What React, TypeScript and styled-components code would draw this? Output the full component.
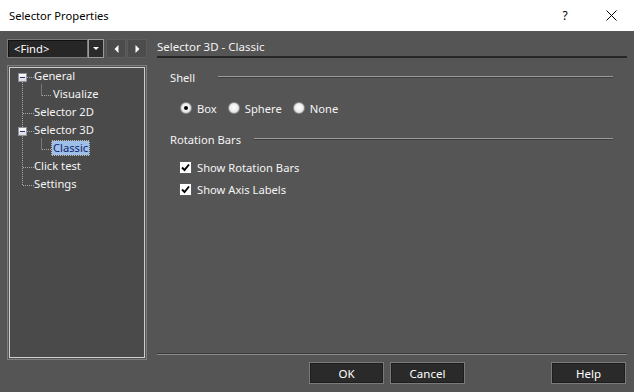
import React from 'react';
import styled, { createGlobalStyle } from 'styled-components';

const FONT = `"Noto Sans", "Segoe UI", "Liberation Sans", Arial, sans-serif`;

const Global = createGlobalStyle`
  html, body { margin: 0; padding: 0; background: #555555; }
  body { font-family: ${FONT}; font-size: 11.2px; }
  * { box-sizing: border-box; }
`;

const Window = styled.div`
  width: 634px;
  height: 392px;
  display: flex;
  flex-direction: column;
  background: #555555;
  overflow: hidden;
  color: #f4f4f4;
`;

const TitleBar = styled.div`
  height: 31px;
  flex: none;
  display: flex;
  align-items: center;
  background: #ffffff;
  color: #000;
  padding-left: 9px;
`;

const Title = styled.span`
  font-size: 11.2px;
  line-height: 16px;
`;

const TitleButtons = styled.div`
  margin-left: auto;
  display: flex;
  height: 100%;
`;

const TitleButton = styled.div`
  width: 46px;
  height: 100%;
  display: flex;
  align-items: center;
  justify-content: center;
  font-size: 12px;
  color: #000;
`;

const Body = styled.div`
  flex: 1;
  display: flex;
  gap: 10px;
  padding: 8px 7px 8px 7px;
  min-height: 0;
`;

const LeftCol = styled.div`
  width: 140px;
  flex: none;
  display: flex;
  flex-direction: column;
  gap: 7px;
  margin-bottom: 24px;
`;

const FindRow = styled.div`
  height: 19px;
  display: flex;
  flex: none;
`;

const Combo = styled.div`
  width: 82px;
  height: 19px;
  background: #262626;
  border: 1px solid #7a7a7a;
  box-shadow: inset 1px 1px 0 #111;
  display: flex;
  align-items: center;
  padding-left: 6px;
  font-size: 11.2px;
  color: #fff;
`;

const DropButton = styled.div`
  width: 16px;
  height: 19px;
  background: #2b2b2b;
  border: 1px solid #9a9a9a;
  display: flex;
  align-items: center;
  justify-content: center;
`;

const NavButton = styled.div<{ $gap?: number }>`
  width: 20px;
  height: 19px;
  margin-left: ${(p) => p.$gap ?? 0}px;
  background: #4c4c4c;
  border: 1px solid #5c5c5c;
  display: flex;
  align-items: center;
  justify-content: center;
`;

const TreeOuter = styled.div`
  flex: 1;
  border: 1px solid #7e7e7e;
  padding: 1px;
  display: flex;
`;

const TreeInner = styled.div`
  flex: 1;
  position: relative;
  border: 1px solid #cfcfcf;
  background: #4a4a4a;
`;

const TreeLines = styled.svg`
  position: absolute;
  left: 0;
  top: 0;
  pointer-events: none;
`;

const TreeRow = styled.div<{ $level: number }>`
  position: relative;
  height: 18px;
  display: flex;
  align-items: flex-start;
  padding-left: ${(p) => 22 + p.$level * 19}px;
`;

const TreeLabel = styled.span<{ $selected?: boolean }>`
  height: 16px;
  line-height: 16px;
  padding: 0 2px;
  font-size: 11.2px;
  color: ${(p) => (p.$selected ? '#14246e' : '#f4f4f4')};
  background: ${(p) => (p.$selected ? '#9ebfe8' : 'transparent')};
  outline: ${(p) => (p.$selected ? '1px dotted #6b4a1e' : 'none')};
  outline-offset: -1px;
`;

const RightCol = styled.div`
  flex: 1;
  display: flex;
  flex-direction: column;
  min-width: 0;
`;

const Header = styled.div`
  height: 19px;
  flex: none;
  font-size: 11.5px;
  line-height: 15px;
  color: #f4f4f4;
  border-bottom: 2px solid #262626;
`;

const Content = styled.div`
  padding: 0 14px 0 13px;
  display: flex;
  flex-direction: column;
`;

const SectionHead = styled.div<{ $top: number }>`
  height: 20px;
  margin-top: ${(p) => p.$top}px;
  display: flex;
  align-items: center;
`;

const SectionLabel = styled.span<{ $w: number }>`
  width: ${(p) => p.$w}px;
  flex: none;
`;

const Etched = styled.div`
  flex: 1;
  height: 2px;
  border-top: 1px solid #9c9c9c;
  border-bottom: 1px solid #3e3e3e;
`;

const RadioRow = styled.div`
  height: 20px;
  margin-top: 11px;
  padding-left: 10px;
  display: flex;
  align-items: center;
`;

const Option = styled.label`
  display: flex;
  align-items: center;
  gap: 5px;
  margin-right: 11px;
`;

const RadioDot = styled.span<{ $on?: boolean }>`
  width: 12px;
  height: 12px;
  border-radius: 50%;
  border: 1px solid #8d8d8d;
  background: radial-gradient(circle at 50% 45%, #ffffff 0%, #f0f0f0 45%, #c9c9c9 100%);
  display: flex;
  align-items: center;
  justify-content: center;
  &::after {
    content: '';
    width: 4px;
    height: 4px;
    border-radius: 50%;
    background: ${(p) => (p.$on ? '#000' : 'transparent')};
  }
`;

const CheckRow = styled.div<{ $top: number }>`
  height: 22px;
  margin-top: ${(p) => p.$top}px;
  padding-left: 9px;
  display: flex;
  align-items: center;
  gap: 5px;
`;

const CheckBox = styled.span`
  width: 13px;
  height: 13px;
  background: #ffffff;
  border: 1px solid #5a5a5a;
  display: flex;
  align-items: center;
  justify-content: center;
`;

const Spacer = styled.div`
  flex: 1;
`;

const Separator = styled.div`
  height: 2px;
  flex: none;
  border-top: 1px solid #3a3a3a;
  border-bottom: 1px solid #8a8a8a;
`;

const ButtonRow = styled.div`
  margin-top: 7px;
  height: 22px;
  display: flex;
  padding-left: 152px;
  gap: 6px;
`;

const Button = styled.div<{ $push?: boolean }>`
  width: 75px;
  height: 22px;
  margin-left: ${(p) => (p.$push ? 'auto' : '0')};
  margin-right: ${(p) => (p.$push ? '1px' : '0')};
  background: #2a2a2a;
  border: 1px solid #7a7a7a;
  box-shadow: inset 0 0 0 1px #1e1e1e;
  display: flex;
  align-items: center;
  justify-content: center;
  font-size: 11.5px;
  color: #fff;
`;

const treeItems: { label: string; level: number; selected?: boolean }[] = [
  { label: 'General', level: 0 },
  { label: 'Visualize', level: 1 },
  { label: 'Selector 2D', level: 0 },
  { label: 'Selector 3D', level: 0 },
  { label: 'Classic', level: 1, selected: true },
  { label: 'Click test', level: 0 },
  { label: 'Settings', level: 0 },
];

const cy = (i: number) => 9 + 18 * i + 0.5;

function Expander({ row }: { row: number }) {
  const y = 9 + 18 * row;
  return (
    <g>
      <defs>
        <linearGradient id={`eg${row}`} x1="0" y1="0" x2="0" y2="1">
          <stop offset="0" stopColor="#ffffff" />
          <stop offset="1" stopColor="#d6d6dc" />
        </linearGradient>
      </defs>
      <rect x={8.5} y={y - 3.5} width={8} height={8} fill={`url(#eg${row})`} stroke="#8f9099" />
      <line x1={10} y1={y + 0.5} x2={15} y2={y + 0.5} stroke="#26357a" />
    </g>
  );
}

function TreeDrawing() {
  const dot = { stroke: '#a9a9a9', strokeDasharray: '1 1', strokeWidth: 1 } as const;
  return (
    <TreeLines width="136" height="140">
      <line x1={12.5} y1={14} x2={12.5} y2={cy(6)} {...dot} />
      {[2, 5, 6].map((r) => (
        <line key={r} x1={13} y1={cy(r)} x2={24} y2={cy(r)} {...dot} />
      ))}
      {[0, 3].map((r) => (
        <line key={r} x1={17} y1={cy(r)} x2={24} y2={cy(r)} {...dot} />
      ))}
      {[1, 4].map((r) => (
        <g key={r}>
          <line x1={31.5} y1={cy(r) - 11} x2={31.5} y2={cy(r)} {...dot} />
          <line x1={32} y1={cy(r)} x2={41} y2={cy(r)} {...dot} />
        </g>
      ))}
      <Expander row={0} />
      <Expander row={3} />
    </TreeLines>
  );
}

function Check() {
  return (
    <CheckBox>
      <svg width="9" height="9" viewBox="0 0 9 9">
        <path d="M1 4.5 L3.5 7 L8 1.5" stroke="#000" strokeWidth="1.9" fill="none" />
      </svg>
    </CheckBox>
  );
}

export default function App() {
  return (
    <>
      <Global />
      <Window>
        <TitleBar>
          <Title>Selector Properties</Title>
          <TitleButtons>
            <TitleButton>?</TitleButton>
            <TitleButton>
              <svg width="11" height="11" viewBox="0 0 11 11">
                <path d="M0.5 0.5 L10.5 10.5 M10.5 0.5 L0.5 10.5" stroke="#000" strokeWidth="1" />
              </svg>
            </TitleButton>
          </TitleButtons>
        </TitleBar>
        <Body>
          <LeftCol>
            <FindRow>
              <Combo>&lt;Find&gt;</Combo>
              <DropButton>
                <svg width="6" height="4" viewBox="0 0 6 4">
                  <path d="M0 0 H6 L3 3 Z" fill="#fff" />
                </svg>
              </DropButton>
              <NavButton $gap={2}>
                <svg width="5" height="8" viewBox="0 0 5 8">
                  <path d="M4.5 0 V8 L0.5 4 Z" fill="#fff" />
                </svg>
              </NavButton>
              <NavButton $gap={1}>
                <svg width="5" height="8" viewBox="0 0 5 8">
                  <path d="M0.5 0 V8 L4.5 4 Z" fill="#fff" />
                </svg>
              </NavButton>
            </FindRow>
            <TreeOuter>
              <TreeInner>
                <TreeDrawing />
                {treeItems.map((it) => (
                  <TreeRow key={it.label} $level={it.level}>
                    <TreeLabel $selected={it.selected}>{it.label}</TreeLabel>
                  </TreeRow>
                ))}
              </TreeInner>
            </TreeOuter>
          </LeftCol>
          <RightCol>
            <Header>Selector 3D - Classic</Header>
            <Content>
              <SectionHead $top={9}>
                <SectionLabel $w={48}>Shell</SectionLabel>
                <Etched />
              </SectionHead>
              <RadioRow>
                <Option>
                  <RadioDot $on />
                  Box
                </Option>
                <Option>
                  <RadioDot />
                  Sphere
                </Option>
                <Option>
                  <RadioDot />
                  None
                </Option>
              </RadioRow>
              <SectionHead $top={11}>
                <SectionLabel $w={84}>Rotation Bars</SectionLabel>
                <Etched />
              </SectionHead>
              <CheckRow $top={7}>
                <Check />
                Show Rotation Bars
              </CheckRow>
              <CheckRow $top={0}>
                <Check />
                Show Axis Labels
              </CheckRow>
            </Content>
            <Spacer />
            <Separator />
            <ButtonRow>
              <Button>OK</Button>
              <Button>Cancel</Button>
              <Button $push>Help</Button>
            </ButtonRow>
          </RightCol>
        </Body>
      </Window>
    </>
  );
}
